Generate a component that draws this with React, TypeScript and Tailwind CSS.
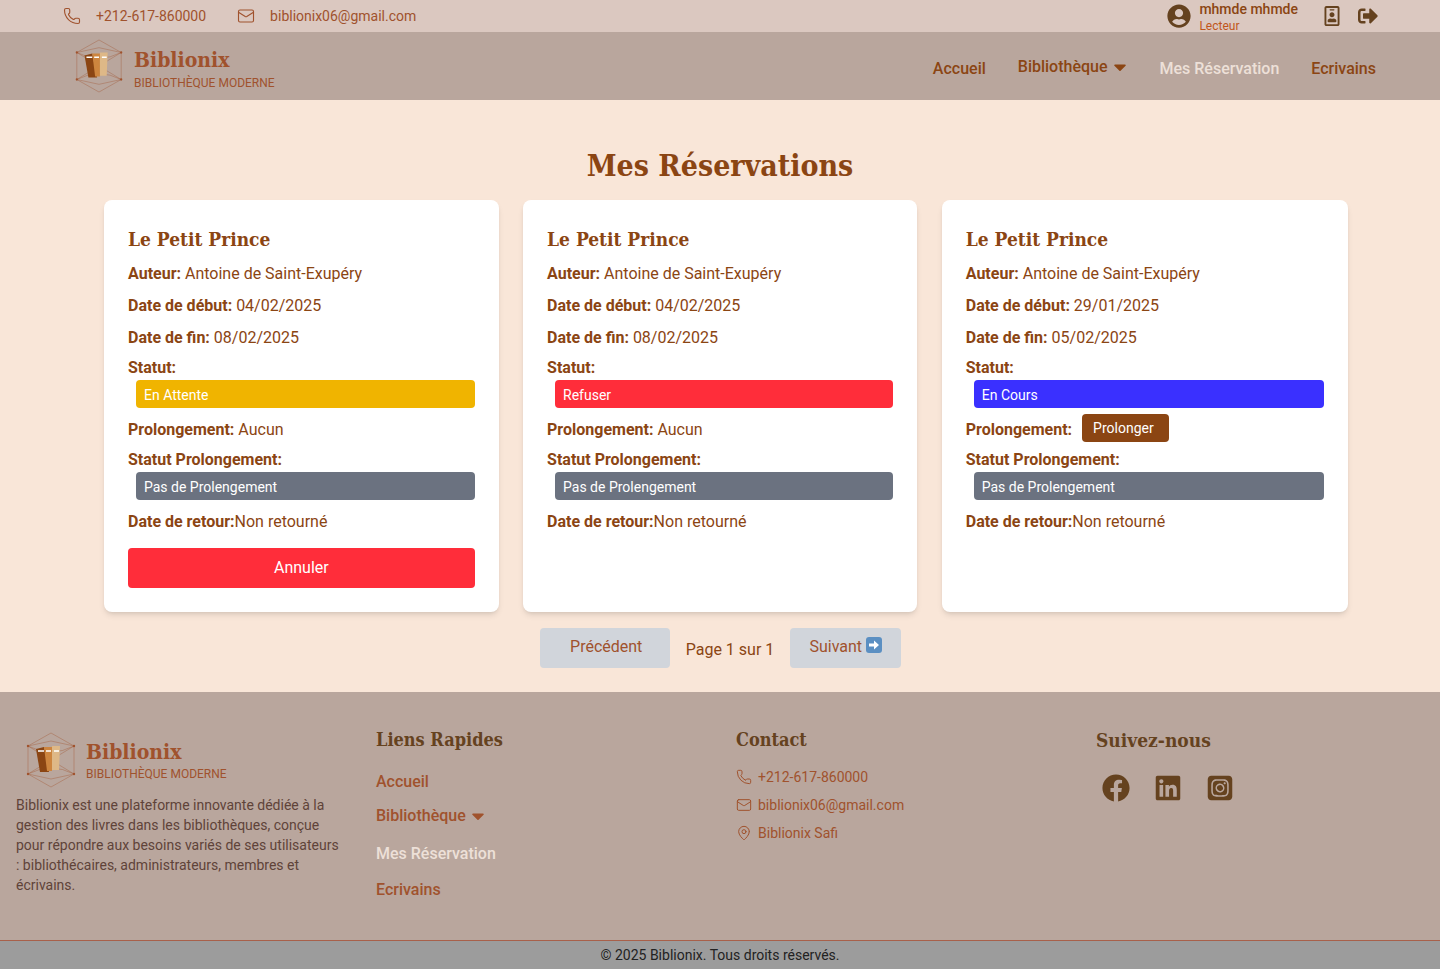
import { Mail, MapPin, Phone } from "lucide-react";
import { FaCaretDown, FaFacebook, FaLinkedin, FaRegIdBadge, FaSignOutAlt, FaUserCircle } from "react-icons/fa";
import { FaSquareInstagram } from "react-icons/fa6";

const SANS = "font-['Roboto',sans-serif]";
const SERIF = "font-['DejaVu_Serif_Condensed','Liberation_Serif',serif]";

const RESERVATIONS = [
  { start: "04/02/2025", end: "08/02/2025", status: "En Attente", color: "bg-[#f0b400]", cancel: true, extend: false },
  { start: "04/02/2025", end: "08/02/2025", status: "Refuser", color: "bg-[#ff2d3a]", cancel: false, extend: false },
  { start: "29/01/2025", end: "05/02/2025", status: "En Cours", color: "bg-[#3a30ff]", cancel: false, extend: true },
];

function Logo({ className }: { className: string }) {
  return (
    <svg viewBox="0 0 54 56" className={className} fill="none">
      <g stroke="#a0522d" strokeWidth="0.5" strokeOpacity="0.75">
        <path d="M27 1 50 14V42L27 55 4 42V14Z" />
        <path d="M4 14 27 9 50 14M4 42 27 47 50 42M4 14 50 42M50 14 4 42M4 14Q27 26 50 14M4 42Q27 30 50 42" />
      </g>
      <g fill="#a0522d">
        <circle cx="4" cy="14" r="1.2" />
        <circle cx="50" cy="14" r="1.2" />
        <circle cx="4" cy="42" r="1.2" />
        <circle cx="50" cy="42" r="1.2" />
      </g>
      <path d="M12 17 20 15 25 40 16 40Z" fill="#8b4513" />
      <path d="M20 15H28V39H23Z" fill="#cd853f" />
      <path d="M28 14H36L35 38H28Z" fill="#deb887" />
      <path d="M14 19H20M22 19H27M30 19H35" stroke="#fff" strokeWidth="1.5" />
    </svg>
  );
}

function Brand({ compact }: { compact?: boolean }) {
  return (
    <div className="flex items-center gap-2">
      <Logo className={compact ? "w-[54px] h-[54px]" : "w-[54px] h-[56px]"} />
      <div className={compact ? "flex flex-col pt-1" : "flex flex-col mb-[3px]"}>
        <span className={`${SERIF} text-[21px] leading-[30px] font-bold text-[#a0522d]`}>Biblionix</span>
        <span className={`text-xs text-[#a0522d] ${compact ? "leading-4" : "leading-[14px]"}`}>BIBLIOTHÈQUE MODERNE</span>
      </div>
    </div>
  );
}

function Field({ label, value }: { label: string; value: string }) {
  return (
    <p className="mb-2 h-6 leading-6">
      <span className="font-bold">{label}</span> {value}
    </p>
  );
}

function Badge({ text, color }: { text: string; color: string }) {
  return <div className={`ml-2 mb-2.5 h-7 pt-0.5 px-2 flex items-center rounded text-sm text-white ${color}`}>{text}</div>;
}

function Card({ r }: { r: (typeof RESERVATIONS)[number] }) {
  return (
    <div className="bg-white rounded-lg p-6 shadow-md text-[#8b4513]">
      <h2 className={`${SERIF} text-[19px] leading-[30px] font-bold mb-2`}>Le Petit Prince</h2>
      <Field label="Auteur:" value="Antoine de Saint-Exupéry" />
      <Field label="Date de début:" value={r.start} />
      <Field label="Date de fin:" value={r.end} />
      <p className="h-6 leading-6 -mt-0.5 font-bold">Statut:</p>
      <Badge text={r.status} color={r.color} />
      {r.extend ? (
        <div className="mb-1.5 h-6 flex items-center gap-2.5">
          <span className="font-bold">Prolongement:</span>
          <button className="h-7 -mt-1 pl-[11px] pr-[15px] rounded bg-[#8b4513] text-sm text-white">Prolonger</button>
        </div>
      ) : (
        <p className="mb-1.5 h-6 leading-6">
          <span className="font-bold">Prolongement:</span> Aucun
        </p>
      )}
      <p className="h-6 leading-6 font-bold">Statut Prolongement:</p>
      <Badge text="Pas de Prolengement" color="bg-[#6b7280]" />
      <p className="h-6 leading-6">
        <span className="font-bold">Date de retour:</span>Non retourné
      </p>
      {r.cancel && <button className="mt-3.5 w-full h-10 rounded bg-[#ff2d3a] text-white">Annuler</button>}
    </div>
  );
}

export default function App() {
  return (
    <div className={`${SANS} min-h-[969px] bg-[#f9e6d8]`}>
      {/* Top bar */}
      <div className="h-8 bg-[#dbc8c0] pl-16 pr-[62px] flex items-center justify-between text-sm text-[#a0522d]">
        <div className="flex items-center">
          <Phone className="w-[18px] h-[18px] -ml-px mr-[15px]" strokeWidth={1.5} />
          <span className="mr-[31px]">+212-617-860000</span>
          <Mail className="w-[18px] h-[18px] mr-[15px]" strokeWidth={1.5} />
          <span>biblionix06@gmail.com</span>
        </div>
        <div className="flex items-center">
          <FaUserCircle className="w-6 h-6 mr-2 text-[#65421f]" />
          <div className="flex flex-col h-8 pt-px">
            <span className="font-medium leading-[17px] text-[#8b4513]">mhmde mhmde</span>
            <span className="text-xs leading-4 text-[#c0561b]">Lecteur</span>
          </div>
          <FaRegIdBadge className="w-5 h-5 ml-6 mr-4 text-[#65421f]" />
          <FaSignOutAlt className="w-5 h-5 text-[#65421f]" />
        </div>
      </div>

      {/* Nav */}
      <nav className="h-[68px] bg-[#b9a69d] pl-[72px] pr-16 flex items-center justify-between">
        <Brand compact />
        <div className="flex items-center gap-8 pt-1.5 font-medium text-[#8b4513]">
          <a>Accueil</a>
          <a className="flex items-center gap-0.5 -mr-0.5 -mt-1">
            Bibliothèque <FaCaretDown className="w-5 h-5" />
          </a>
          <a className="text-[#ede0d8]">Mes Réservation</a>
          <a>Ecrivains</a>
        </div>
      </nav>

      {/* Reservations */}
      <main className="h-[592px] pt-[43px]">
        <h1 className={`${SERIF} text-center text-[30px] leading-[46px] font-bold text-[#8b4513] mb-[11px]`}>Mes Réservations</h1>
        <div className="ml-[104px] grid grid-cols-[394.67px_394.3px_406px] gap-x-[24.4px] h-[412px]">
          {RESERVATIONS.map((r, i) => (
            <Card key={i} r={r} />
          ))}
        </div>
        <div className="mt-4 pl-px flex justify-center items-center text-[#8b4513]">
          <button className="w-[130px] h-10 pb-0.5 pl-[3px] rounded bg-[#d1d5db] text-[#a0522d]">Précédent</button>
          <span className="ml-4 mr-4 mt-1">Page 1 sur 1</span>
          <button className="w-[111px] h-10 pb-0.5 rounded bg-[#d1d5db] text-[#a0522d] flex items-center justify-center gap-1">
            Suivant
            <svg viewBox="0 0 16 16" className="w-4 h-4 -mt-1">
              <rect width="16" height="16" rx="3" fill="#5b8fc2" />
              <path d="M3 6.5H8V3.5L13 8 8 12.5V9.5H3Z" fill="#fff" />
            </svg>
          </button>
        </div>
      </main>

      {/* Footer */}
      <footer className="h-[248px] bg-[#b9a69d] grid grid-cols-4">
        <div className="pl-4 pt-10">
          <div className="pl-2">
            <Brand />
          </div>
          <p className="mt-[7px] w-[325px] text-sm leading-5 text-[#5f4339]">
            Biblionix est une plateforme innovante dédiée à la gestion des livres dans les bibliothèques, conçue pour
            répondre aux besoins variés de ses utilisateurs : bibliothécaires, administrateurs, membres et écrivains.
          </p>
        </div>
        <div className="pl-4 pt-8 font-medium text-[#a0522d]">
          <h3 className={`${SERIF} text-[18px] leading-8 font-bold text-[#65421f]`}>Liens Rapides</h3>
          <a className="block mt-3.5 leading-6">Accueil</a>
          <a className="mt-2.5 flex items-center gap-0.5 leading-6">
            Bibliothèque <FaCaretDown className="w-5 h-5" />
          </a>
          <a className="block mt-3.5 leading-6 text-[#ede0d8]">Mes Réservation</a>
          <a className="block mt-3 leading-6">Ecrivains</a>
        </div>
        <div className="pl-4 pt-8 text-sm text-[#a0522d]">
          <h3 className={`${SERIF} text-[18px] leading-8 font-bold text-[#65421f]`}>Contact</h3>
          <div className="mt-[11px] flex flex-col gap-2">
            <span className="h-5 flex items-center gap-1.5"><Phone className="w-4 h-4" strokeWidth={1.5} />+212-617-860000</span>
            <span className="h-5 flex items-center gap-1.5"><Mail className="w-4 h-4" strokeWidth={1.5} />biblionix06@gmail.com</span>
            <span className="h-5 flex items-center gap-1.5"><MapPin className="w-4 h-4" strokeWidth={1.5} />Biblionix Safi</span>
          </div>
        </div>
        <div className="pl-4 pt-8">
          <h3 className={`${SERIF} text-[19px] leading-8 font-bold text-[#65421f]`}>Suivez-nous</h3>
          <div className="mt-[18px] ml-1.5 flex items-center gap-6 text-[#65421f]">
            <FaFacebook className="w-7 h-7" />
            <FaLinkedin className="w-7 h-7" />
            <FaSquareInstagram className="w-7 h-7" />
          </div>
        </div>
      </footer>

      <div className="h-[29px] bg-[#9c9c9c] border-t border-[#a8604a] flex items-center justify-center text-sm text-[#222]">
        © 2025 Biblionix. Tous droits réservés.
      </div>
    </div>
  );
}
